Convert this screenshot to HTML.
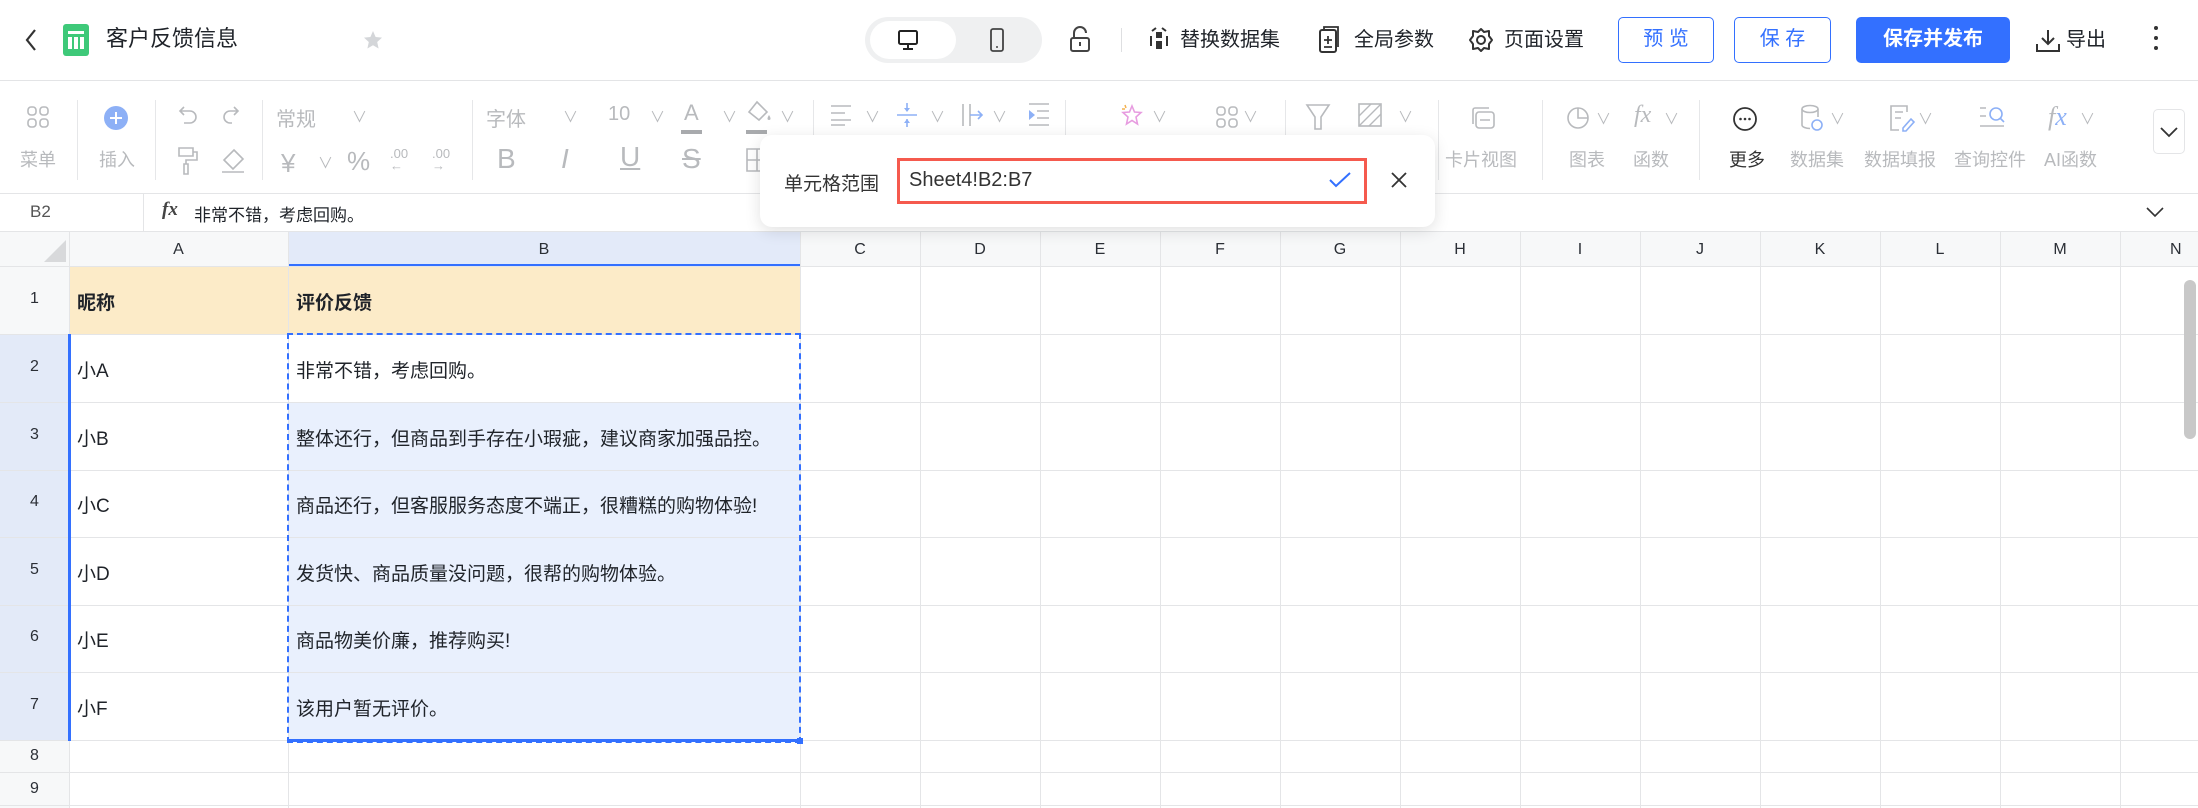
<!DOCTYPE html>
<html><head><meta charset="utf-8">
<style>
*{margin:0;padding:0;box-sizing:border-box}
body{width:2198px;height:808px;overflow:hidden;background:#fff;font-family:"Liberation Sans","Noto Sans CJK SC",sans-serif;color:#1f2329;position:relative}
.a{position:absolute}
.t{position:absolute;white-space:nowrap}
.tb{color:#b8babd;font-size:18px}
.dv{position:absolute;width:1px;background:#e6e7e9;top:100px;height:80px}
.ch{position:absolute;font-size:15px;color:#b8babd}
svg{position:absolute;overflow:visible}
.hl{position:absolute;height:1px;background:#e4e5e7}
.vl{position:absolute;width:1px;background:#e4e5e7}
.cl{position:absolute;top:232px;height:35px;line-height:35px;text-align:center;font-size:16px;color:#2b2f36}
.rn{position:absolute;left:0;width:69px;text-align:center;font-size:16px;color:#2b2f36}
.ct{position:absolute;font-size:19px;color:#1f2329}
.btn{position:absolute;top:17px;height:46px;border:1.5px solid #3370ff;border-radius:5px;color:#3370ff;font-size:20px;text-align:center;line-height:43px}
.tp{position:absolute;top:26px;font-size:20px;color:#1f2329;line-height:28px}
</style></head><body>

<!-- top bar -->
<svg style="left:24px;top:28px" width="14" height="24"><path d="M11 2 L3 12 L11 22" fill="none" stroke="#333" stroke-width="2.2"/></svg>
<div class="a" style="left:63px;top:24px;width:26px;height:32px;background:#3ec979;border-radius:3px"></div>
<div class="a" style="left:68px;top:31px;width:16px;height:3px;background:#fff"></div>
<div class="a" style="left:68px;top:37px;width:16px;height:12px;background:repeating-linear-gradient(90deg,#fff 0 4px,#3ec979 4px 6px)"></div>
<div class="t" style="left:106px;top:24px;font-size:22px;line-height:30px">客户反馈信息</div>
<svg style="left:363px;top:30px" width="20" height="20"><path d="M10 1 L12.6 7 L19 7.6 L14.2 12 L15.6 18.5 L10 15.2 L4.4 18.5 L5.8 12 L1 7.6 L7.4 7 Z" fill="#d4d6d9"/></svg>
<div class="a" style="left:865px;top:17px;width:177px;height:46px;background:#eff0f1;border-radius:23px"></div>
<div class="a" style="left:870px;top:21px;width:86px;height:38px;background:#fff;border-radius:19px"></div>
<svg style="left:897px;top:29px" width="24" height="24"><rect x="2" y="2" width="18" height="13" rx="1.5" fill="none" stroke="#222" stroke-width="2"/><path d="M11 15v4M6 20h10" stroke="#222" stroke-width="2"/></svg>
<svg style="left:990px;top:28px" width="16" height="26"><rect x="1" y="1" width="12" height="22" rx="2" fill="none" stroke="#444" stroke-width="1.8"/><circle cx="7" cy="19" r="1" fill="#444"/></svg>
<svg style="left:1069px;top:26px" width="24" height="28"><path d="M5 12V7a6 6 0 0 1 12 0" fill="none" stroke="#444" stroke-width="2"/><rect x="2" y="12" width="18" height="13" rx="2" fill="none" stroke="#444" stroke-width="2"/><path d="M11 16v4" stroke="#444" stroke-width="2"/></svg>
<div class="a" style="left:1121px;top:28px;width:1px;height:24px;background:#dedfe1"></div>
<svg style="left:1148px;top:26px" width="22" height="26"><path d="M4 5 L8 2 M18 5 L14 2 M3 10v10M19 10v10" stroke="#333" stroke-width="2" fill="none"/><rect x="8" y="6" width="6" height="6" fill="#333"/><rect x="8" y="15" width="6" height="8" fill="#333"/></svg>
<div class="tp" style="left:1180px">替换数据集</div>
<svg style="left:1318px;top:25px" width="22" height="30"><rect x="2" y="5" width="16" height="22" rx="2" fill="none" stroke="#333" stroke-width="2"/><path d="M6 5V2h14v20M10 11v8M6 15h8M6 22h8" stroke="#333" stroke-width="1.8" fill="none"/></svg>
<div class="tp" style="left:1354px">全局参数</div>
<svg style="left:1468px;top:27px" width="26" height="26"><circle cx="13" cy="13" r="4" fill="none" stroke="#333" stroke-width="2"/><path d="M13 2 L16 5 L21 4 L21 9 L24 13 L21 17 L21 22 L16 21 L13 24 L10 21 L5 22 L5 17 L2 13 L5 9 L5 4 L10 5 Z" fill="none" stroke="#333" stroke-width="2" stroke-linejoin="round"/></svg>
<div class="tp" style="left:1504px">页面设置</div>
<div class="btn" style="left:1618px;width:96px">预 览</div>
<div class="btn" style="left:1734px;width:97px">保 存</div>
<div class="btn" style="left:1856px;width:154px;background:#3370ff;color:#fff;font-weight:bold">保存并发布</div>
<svg style="left:2035px;top:28px" width="26" height="26"><path d="M13 2v14M7 10l6 6 6-6M2 16v7h22v-7" fill="none" stroke="#333" stroke-width="2"/></svg>
<div class="tp" style="left:2066px">导出</div>
<div class="a" style="left:2154px;top:26px;width:4px;height:4px;border-radius:2px;background:#333;box-shadow:0 10px 0 #333,0 20px 0 #333"></div>
<div class="hl" style="left:0;top:80px;width:2198px;background:#e3e4e6"></div>

<!-- toolbar -->
<svg style="left:27px;top:106px" width="24" height="24"><g fill="none" stroke="#b8babd" stroke-width="1.6"><rect x="1" y="1" width="8" height="8" rx="3"/><rect x="13" y="1" width="8" height="8" rx="3"/><rect x="1" y="13" width="8" height="8" rx="3"/><rect x="13" y="13" width="8" height="8" rx="3"/></g></svg>
<div class="t tb" style="left:20px;top:146px">菜单</div>
<div class="dv" style="left:77px"></div>
<svg style="left:104px;top:106px" width="24" height="24"><circle cx="12" cy="12" r="12" fill="#8db0f6"/><path d="M12 6v12M6 12h12" stroke="#fff" stroke-width="2"/></svg>
<div class="t tb" style="left:99px;top:146px">插入</div>
<div class="dv" style="left:155px"></div>
<svg style="left:176px;top:105px" width="24" height="24"><path d="M4 6h10a6 6 0 0 1 0 12H8M8 2 L4 6 L8 10" fill="none" stroke="#b8babd" stroke-width="1.6"/></svg>
<svg style="left:220px;top:105px" width="24" height="24"><path d="M18 6H10a6 6 0 0 0 0 12h2M14 2 L18 6 L14 10" fill="none" stroke="#b8babd" stroke-width="1.6"/></svg>
<svg style="left:177px;top:146px" width="24" height="30"><path d="M2 2h14v8H2zM16 6h4v8H9v4M7 18h4v10H7z" fill="none" stroke="#b8babd" stroke-width="1.6"/></svg>
<svg style="left:220px;top:148px" width="26" height="26"><path d="M14 2 L23 11 L13 21 L4 12 Z M4 12 L9 17 M2 24h22" fill="none" stroke="#b8babd" stroke-width="1.6"/></svg>
<div class="dv" style="left:262px"></div>
<div class="t tb" style="left:276px;top:103px;font-size:20px">常规</div>
<div class="ch" style="left:352px;top:106px">∨</div>
<div class="t tb" style="left:281px;top:148px;font-size:26px">¥</div>
<div class="ch" style="left:318px;top:152px">∨</div>
<div class="t tb" style="left:347px;top:146px;font-size:26px">%</div>
<div class="t tb" style="left:390px;top:148px;font-size:13px;line-height:12px">.00<br>←</div>
<div class="t tb" style="left:432px;top:148px;font-size:13px;line-height:12px">.00<br>→</div>
<div class="dv" style="left:472px"></div>
<div class="t tb" style="left:486px;top:103px;font-size:20px">字体</div>
<div class="ch" style="left:563px;top:106px">∨</div>
<div class="t tb" style="left:608px;top:103px;font-size:20px">10</div>
<div class="ch" style="left:650px;top:106px">∨</div>
<div class="t tb" style="left:684px;top:100px;font-size:22px">A</div>
<div class="a" style="left:681px;top:130px;width:21px;height:4px;background:#a8aaad"></div>
<div class="ch" style="left:722px;top:106px">∨</div>
<svg style="left:747px;top:100px" width="26" height="26"><path d="M10 2 L20 12 L12 20 L2 12 Z" fill="none" stroke="#b8babd" stroke-width="1.6"/><path d="M22 15c2 3 2 5 0 5s-2-2 0-5z" fill="#b8babd"/></svg>
<div class="a" style="left:746px;top:130px;width:21px;height:4px;background:#a8aaad"></div>
<div class="ch" style="left:780px;top:106px">∨</div>
<div class="t tb" style="left:497px;top:143px;font-size:28px">B</div>
<div class="t tb" style="left:561px;top:143px;font-size:28px;font-style:italic">I</div>
<div class="t tb" style="left:620px;top:141px;font-size:28px;text-decoration:underline">U</div>
<div class="t tb" style="left:682px;top:143px;font-size:28px;text-decoration:line-through">S</div>
<svg style="left:746px;top:148px" width="22" height="24"><path d="M1 1h20v22H1zM1 12h20M11 1v22" fill="none" stroke="#b8babd" stroke-width="1.6"/></svg>
<div class="dv" style="left:813px"></div>
<svg style="left:830px;top:104px" width="22" height="22"><path d="M1 2h20M1 9h14M1 16h20M1 21h14" stroke="#b8babd" stroke-width="1.6"/></svg>
<div class="ch" style="left:865px;top:106px">∨</div>
<svg style="left:896px;top:102px" width="22" height="26"><path d="M1 13h20M11 1v8M11 17v8" stroke="#8db0f6" stroke-width="1.6"/><path d="M8 6l3 4 3-4M8 21l3-4 3 4" fill="#8db0f6"/></svg>
<div class="ch" style="left:930px;top:106px">∨</div>
<svg style="left:961px;top:102px" width="24" height="26"><path d="M2 2v22M9 2v22" stroke="#b8babd" stroke-width="1.6"/><path d="M9 13h12M17 9l4 4-4 4" fill="none" stroke="#8db0f6" stroke-width="1.6"/></svg>
<div class="ch" style="left:992px;top:106px">∨</div>
<svg style="left:1027px;top:102px" width="24" height="26"><path d="M2 2h20M10 9h12M10 16h12M2 23h20" stroke="#b8babd" stroke-width="1.6"/><path d="M2 8l6 5-6 5z" fill="#8db0f6"/></svg>
<div class="dv" style="left:1065px"></div>
<svg style="left:1121px;top:104px" width="22" height="26"><path d="M11 2 L13.5 8 L20 8.5 L15 13 L16.5 20 L11 16.5 L5.5 20 L7 13 L2 8.5 L8.5 8 Z" fill="none" stroke="#e79ce0" stroke-width="1.6"/><path d="M4 1l1 3M1 5l3 0" stroke="#f3b14f" stroke-width="1.5"/></svg>
<div class="ch" style="left:1152px;top:106px">∨</div>
<svg style="left:1216px;top:106px" width="24" height="24"><g fill="none" stroke="#b8babd" stroke-width="1.6"><rect x="1" y="1" width="8" height="8" rx="3"/><rect x="13" y="1" width="8" height="8" rx="3"/><rect x="1" y="13" width="8" height="8" rx="3"/><rect x="13" y="13" width="8" height="8" rx="3"/></g></svg>
<div class="ch" style="left:1243px;top:106px">∨</div>
<div class="dv" style="left:1285px"></div>
<svg style="left:1306px;top:103px" width="24" height="28"><path d="M1 2h22L15 14v12H9V14z" fill="none" stroke="#b8babd" stroke-width="1.6"/></svg>
<svg style="left:1358px;top:103px" width="26" height="26"><rect x="1" y="1" width="22" height="22" fill="none" stroke="#b8babd" stroke-width="1.6"/><path d="M1 23L23 1M1 13L13 1M11 23L23 11" stroke="#b8babd" stroke-width="1.4"/></svg>
<div class="ch" style="left:1398px;top:106px">∨</div>
<div class="dv" style="left:1438px"></div>
<svg style="left:1471px;top:106px" width="26" height="26"><rect x="5" y="6" width="18" height="16" rx="3" fill="none" stroke="#b8babd" stroke-width="1.6"/><path d="M2 18V4a2 2 0 0 1 2-2h14M9 14h10" stroke="#b8babd" stroke-width="1.6" fill="none"/></svg>
<div class="t tb" style="left:1445px;top:146px">卡片视图</div>
<div class="dv" style="left:1542px"></div>
<svg style="left:1566px;top:106px" width="26" height="26"><circle cx="12" cy="12" r="10" fill="none" stroke="#b8babd" stroke-width="1.6"/><path d="M12 2v10h10" fill="none" stroke="#b8babd" stroke-width="1.6"/></svg>
<div class="ch" style="left:1596px;top:108px">∨</div>
<div class="t tb" style="left:1569px;top:146px">图表</div>
<div class="t tb" style="left:1634px;top:102px;font-size:24px;font-style:italic;font-family:'Liberation Serif',serif">fx</div>
<div class="ch" style="left:1664px;top:108px">∨</div>
<div class="t tb" style="left:1633px;top:146px">函数</div>
<div class="dv" style="left:1699px"></div>
<svg style="left:1732px;top:106px" width="28" height="28"><circle cx="13" cy="13" r="11" fill="none" stroke="#333" stroke-width="1.8"/><circle cx="8.5" cy="13" r="1.3" fill="#333"/><circle cx="13" cy="13" r="1.3" fill="#333"/><circle cx="17.5" cy="13" r="1.3" fill="#333"/></svg>
<div class="t" style="left:1729px;top:146px;font-size:18px;color:#333">更多</div>
<svg style="left:1800px;top:104px" width="26" height="30"><ellipse cx="10" cy="5" rx="8" ry="3.5" fill="none" stroke="#b8babd" stroke-width="1.6"/><path d="M2 5v16c0 2 4 3.5 8 3.5M18 5v8" fill="none" stroke="#b8babd" stroke-width="1.6"/><circle cx="17" cy="21" r="5" fill="none" stroke="#8db0f6" stroke-width="1.6"/></svg>
<div class="ch" style="left:1830px;top:108px">∨</div>
<div class="t tb" style="left:1790px;top:146px">数据集</div>
<svg style="left:1889px;top:104px" width="26" height="28"><path d="M18 8V2H2v24h8M6 8h8M6 14h6" fill="none" stroke="#b8babd" stroke-width="1.6"/><path d="M14 24l8-9 3 3-8 9h-3z" fill="none" stroke="#8db0f6" stroke-width="1.6"/></svg>
<div class="ch" style="left:1918px;top:108px">∨</div>
<div class="t tb" style="left:1864px;top:146px">数据填报</div>
<svg style="left:1978px;top:104px" width="28" height="26"><path d="M2 4h6M2 12h6M2 22h24" stroke="#b8babd" stroke-width="1.6"/><circle cx="18" cy="10" r="6" fill="none" stroke="#8db0f6" stroke-width="1.6"/><path d="M22 14l4 4" stroke="#8db0f6" stroke-width="1.6"/></svg>
<div class="t tb" style="left:1954px;top:146px">查询控件</div>
<div class="t tb" style="left:2048px;top:102px;font-size:26px;font-style:italic;font-family:'Liberation Serif',serif">f<span style="color:#8db0f6">x</span></div>
<div class="ch" style="left:2080px;top:108px">∨</div>
<div class="t tb" style="left:2044px;top:146px">AI函数</div>
<div class="a" style="left:2153px;top:109px;width:32px;height:45px;border:1px solid #e4e5e7;border-radius:5px;background:#fff"></div>
<svg style="left:2160px;top:127px" width="18" height="12"><path d="M1 1l8 8 8-8" fill="none" stroke="#333" stroke-width="1.8"/></svg>
<div class="hl" style="left:0;top:193px;width:2198px"></div>

<!-- formula bar -->
<div class="t" style="left:30px;top:202px;font-size:17px;color:#555">B2</div>
<div class="vl" style="left:143px;top:193px;height:38px"></div>
<div class="t" style="left:162px;top:199px;font-size:19px;font-style:italic;font-family:'Liberation Serif',serif;color:#444;font-weight:bold">fx</div>
<div class="t" style="left:194px;top:201px;font-size:17px;color:#1f2329">非常不错，考虑回购。</div>
<svg style="left:2146px;top:207px" width="18" height="11"><path d="M1 1l8 8 8-8" fill="none" stroke="#333" stroke-width="1.6"/></svg>
<div class="hl" style="left:0;top:231px;width:2198px"></div>

<!-- grid -->
<div class="a" style="left:0;top:232px;width:2198px;height:35px;background:#f7f8f9"></div>
<div class="a" style="left:0;top:232px;width:69px;height:576px;background:#f7f8f9"></div>
<div class="a" style="left:288px;top:232px;width:512px;height:35px;background:#e3eaf9"></div>
<div class="a" style="left:288px;top:264px;width:512px;height:3px;background:#3370ff"></div>
<div class="a" style="left:0;top:334px;width:69px;height:406px;background:#e3eaf8"></div>
<svg style="left:44px;top:240px" width="22" height="22"><path d="M22 0V22H0Z" fill="#d8d9db"/></svg>
<div class="a" style="left:69px;top:267px;width:731px;height:67px;background:#fcebc8"></div>
<div class="a" style="left:288px;top:402px;width:512px;height:338px;background:#e9f0fd"></div>

<div class="hl" style="left:0;top:266px;width:2198px"></div>
<div class="hl" style="left:0;top:334px;width:2198px"></div>
<div class="hl" style="left:0;top:402px;width:2198px"></div>
<div class="hl" style="left:0;top:470px;width:2198px"></div>
<div class="hl" style="left:0;top:537px;width:2198px"></div>
<div class="hl" style="left:0;top:605px;width:2198px"></div>
<div class="hl" style="left:0;top:672px;width:2198px"></div>
<div class="hl" style="left:0;top:740px;width:2198px"></div>
<div class="hl" style="left:0;top:772px;width:2198px"></div>
<div class="hl" style="left:0;top:805px;width:2198px"></div>
<div class="vl" style="left:69px;top:232px;height:576px"></div>
<div class="vl" style="left:288px;top:232px;height:576px"></div>
<div class="vl" style="left:800px;top:232px;height:576px"></div>
<div class="vl" style="left:920px;top:232px;height:576px"></div>
<div class="vl" style="left:1040px;top:232px;height:576px"></div>
<div class="vl" style="left:1160px;top:232px;height:576px"></div>
<div class="vl" style="left:1280px;top:232px;height:576px"></div>
<div class="vl" style="left:1400px;top:232px;height:576px"></div>
<div class="vl" style="left:1520px;top:232px;height:576px"></div>
<div class="vl" style="left:1640px;top:232px;height:576px"></div>
<div class="vl" style="left:1760px;top:232px;height:576px"></div>
<div class="vl" style="left:1880px;top:232px;height:576px"></div>
<div class="vl" style="left:2000px;top:232px;height:576px"></div>
<div class="vl" style="left:2120px;top:232px;height:576px"></div>

<div class="cl" style="left:69px;width:219px">A</div>
<div class="cl" style="left:288px;width:512px">B</div>
<div class="cl" style="left:800px;width:120px">C</div>
<div class="cl" style="left:920px;width:120px">D</div>
<div class="cl" style="left:1040px;width:120px">E</div>
<div class="cl" style="left:1160px;width:120px">F</div>
<div class="cl" style="left:1280px;width:120px">G</div>
<div class="cl" style="left:1400px;width:120px">H</div>
<div class="cl" style="left:1520px;width:120px">I</div>
<div class="cl" style="left:1640px;width:120px">J</div>
<div class="cl" style="left:1760px;width:120px">K</div>
<div class="cl" style="left:1880px;width:120px">L</div>
<div class="cl" style="left:2000px;width:120px">M</div>
<div class="cl" style="left:2120px;width:120px;text-align:left;padding-left:50px">N</div>

<div class="rn" style="top:290px">1</div>
<div class="rn" style="top:358px">2</div>
<div class="rn" style="top:426px">3</div>
<div class="rn" style="top:493px">4</div>
<div class="rn" style="top:561px">5</div>
<div class="rn" style="top:628px">6</div>
<div class="rn" style="top:696px">7</div>
<div class="rn" style="top:747px">8</div>
<div class="rn" style="top:780px">9</div>

<div class="ct" style="left:77px;top:288px;font-weight:bold">昵称</div>
<div class="ct" style="left:296px;top:288px;font-weight:bold">评价反馈</div>
<div class="ct" style="left:77px;top:356px">小A</div>
<div class="ct" style="left:77px;top:424px">小B</div>
<div class="ct" style="left:77px;top:491px">小C</div>
<div class="ct" style="left:77px;top:559px">小D</div>
<div class="ct" style="left:77px;top:626px">小E</div>
<div class="ct" style="left:77px;top:694px">小F</div>
<div class="ct" style="left:296px;top:356px">非常不错，考虑回购。</div>
<div class="ct" style="left:296px;top:424px">整体还行，但商品到手存在小瑕疵，建议商家加强品控。</div>
<div class="ct" style="left:296px;top:491px">商品还行，但客服服务态度不端正，很糟糕的购物体验!</div>
<div class="ct" style="left:296px;top:559px">发货快、商品质量没问题，很帮的购物体验。</div>
<div class="ct" style="left:296px;top:626px">商品物美价廉，推荐购买!</div>
<div class="ct" style="left:296px;top:694px">该用户暂无评价。</div>

<div class="a" style="left:68px;top:334px;width:3px;height:407px;background:#3370ff"></div>
<div class="a" style="left:287px;top:333px;width:514px;height:410px;border:2px dashed #3370ff"></div>
<div class="a" style="left:287px;top:739px;width:514px;height:3px;background:#3370ff"></div>
<div class="a" style="left:797px;top:738px;width:6px;height:6px;background:#3370ff"></div>

<div class="a" style="left:2184px;top:280px;width:12px;height:159px;background:#c8c8c8;border-radius:6px"></div>

<!-- popup -->
<div class="a" style="left:760px;top:135px;width:675px;height:92px;background:#fff;border-radius:12px;box-shadow:0 4px 16px rgba(0,0,0,0.12)"></div>
<div class="t" style="left:784px;top:169px;font-size:19px;color:#333">单元格范围</div>
<div class="a" style="left:897px;top:158px;width:470px;height:46px;border:3px solid #f55a4e;background:#fff"></div>
<div class="t" style="left:909px;top:169px;font-size:20px;color:#333">Sheet4!B2:B7</div>
<svg style="left:1329px;top:172px" width="22" height="16"><path d="M1 8l6 6L21 1" fill="none" stroke="#3370ff" stroke-width="2"/></svg>
<svg style="left:1391px;top:172px" width="16" height="16"><path d="M1 1l14 14M15 1L1 15" stroke="#333" stroke-width="1.8"/></svg>
</body></html>
